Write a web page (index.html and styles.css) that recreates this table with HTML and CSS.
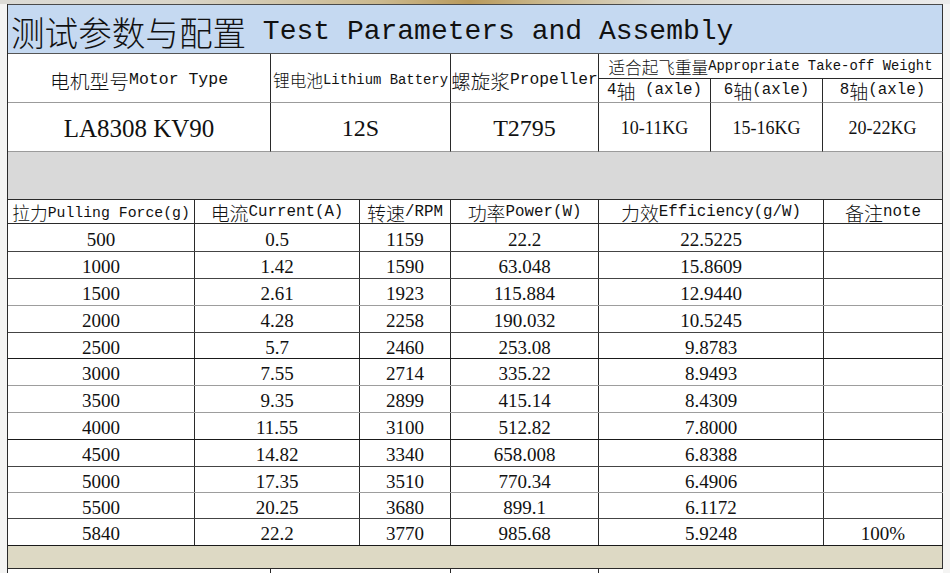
FILE: index.html
```html
<!DOCTYPE html>
<html lang="zh">
<head>
<meta charset="utf-8">
<title>测试参数与配置 Test Parameters and Assembly</title>
<link rel="stylesheet" href="styles.css">
</head>
<body>
<div class="strip"></div>
<div class="sheet">
  <div class="title mono"><span class="zh">测试参数与配置</span> Test Parameters and Assembly</div>

  <div class="spec">
    <div class="c tall lg mono f198"><span class="zh">电机型号</span>Motor Type</div>
    <div class="c tall lg mono f167"><span class="zh">锂电池</span>Lithium Battery</div>
    <div class="c tall lg mono f195"><span class="zh">螺旋浆</span>Propeller</div>
    <div class="c wide mono f166"><span class="zh">适合起飞重量</span>Appropriate Take-off Weight</div>
    <div class="c lg axle mono f19">4<span class="zh">轴</span> (axle)</div>
    <div class="c lg axle mono f19">6<span class="zh">轴</span>(axle)</div>
    <div class="c lg axle mono f19">8<span class="zh">轴</span>(axle)</div>
    <div class="c lg num big">LA8308 KV90</div>
    <div class="c lg num mid">12S</div>
    <div class="c lg num mid">T2795</div>
    <div class="c lg num small">10-11KG</div>
    <div class="c lg num small">15-16KG</div>
    <div class="c lg num small">20-22KG</div>
  </div>

  <div class="band grey"></div>

  <div class="data">
    <div class="row head mono">
      <div class="f178"><span class="zh">拉力</span>Pulling Force(g)</div>
      <div><span class="zh">电流</span>Current(A)</div>
      <div><span class="zh">转速</span>/RPM</div>
      <div><span class="zh">功率</span>Power(W)</div>
      <div><span class="zh">力效</span>Efficiency(g/W)</div>
      <div><span class="zh">备注</span>note</div>
    </div>
    <div class="row num h28"><div>500</div><div>0.5</div><div>1159</div><div>22.2</div><div>22.5225</div><div></div></div>
    <div class="row num"><div>1000</div><div>1.42</div><div>1590</div><div>63.048</div><div>15.8609</div><div></div></div>
    <div class="row num lg"><div>1500</div><div>2.61</div><div>1923</div><div>115.884</div><div>12.9440</div><div></div></div>
    <div class="row num"><div>2000</div><div>4.28</div><div>2258</div><div>190.032</div><div>10.5245</div><div></div></div>
    <div class="row num h26 dk"><div>2500</div><div>5.7</div><div>2460</div><div>253.08</div><div>9.8783</div><div></div></div>
    <div class="row num lg"><div>3000</div><div>7.55</div><div>2714</div><div>335.22</div><div>8.9493</div><div></div></div>
    <div class="row num lg"><div>3500</div><div>9.35</div><div>2899</div><div>415.14</div><div>8.4309</div><div></div></div>
    <div class="row num dk"><div>4000</div><div>11.55</div><div>3100</div><div>512.82</div><div>7.8000</div><div></div></div>
    <div class="row num"><div>4500</div><div>14.82</div><div>3340</div><div>658.008</div><div>6.8388</div><div></div></div>
    <div class="row num h26 lg"><div>5000</div><div>17.35</div><div>3510</div><div>770.34</div><div>6.4906</div><div></div></div>
    <div class="row num h26"><div>5500</div><div>20.25</div><div>3680</div><div>899.1</div><div>6.1172</div><div></div></div>
    <div class="row num dk"><div>5840</div><div>22.2</div><div>3770</div><div>985.68</div><div>5.9248</div><div>100%</div></div>
  </div>

  <div class="band tan"></div>

  <div class="tail">
    <div></div><div></div><div></div><div class="open"></div>
  </div>
</div>
</body>
</html>
```

FILE: styles.css
```css
* {
  box-sizing: border-box;
}

html, body {
  margin: 0;
  padding: 0;
}

body {
  background: #f4f4f3;
  color: #111;
  width: 950px;
  height: 573px;
  overflow: hidden;
}

.strip {
  height: 4px;
  background: linear-gradient(90deg, #dcdbd6 0, #d9d5c9 180px, #cbb98f 380px, #b99a5c 470px, #c9b68a 540px, #dad6ca 660px, #e4e3e0 800px, #ebebeb 950px);
}

.sheet {
  margin-left: 7px;
  width: 936px;
  border-left: 1px solid #2a2a2a;
  background: #fff;
}

.mono {
  font-family: "Liberation Mono", "Noto Sans CJK SC", monospace;
}

.num {
  font-family: "Liberation Serif", "Noto Sans CJK SC", serif;
}

.zh {
  font-family: "Noto Sans CJK SC", sans-serif;
  font-size: 1.2em;
  font-weight: 300;
}

/* title */
.title {
  height: 50px;
  background: #c5d9f1;
  border-top: 1px solid #4a4a4a;
  border-bottom: 1px solid #555;
  border-right: 1px solid #333;
  display: flex;
  align-items: center;
  padding: 5px 0 0 3px;
  font-size: 28px;
  line-height: 1;
  white-space: pre;
}

/* spec block */
.spec {
  display: grid;
  grid-template-columns: 263px 180px 148px 112px 112px 120px;
  grid-template-rows: 25px 24px 49px;
}

.c {
  border-right: 1px solid #2a2a2a;
  border-bottom: 1px solid #2a2a2a;
  display: flex;
  align-items: center;
  justify-content: center;
  white-space: pre;
  line-height: 1;
}

.c.tall {
  grid-row: span 2;
  padding-top: 5px;
}

.c.wide {
  grid-column: span 3;
  padding-top: 2px;
}

.c.axle {
  padding-top: 1px;
}

.c.lg {
  border-bottom-color: #9b9b9b;
}

.f198 { font-size: 16.5px; }
.f195 { font-size: 16.25px; }
.f19 { font-size: 15.8px; }
.f167 { font-size: 13.9px; }
.f166 { font-size: 13.85px; }
.f178 { font-size: 14.8px; }

.big { font-size: 25px; padding-top: 2px; }
.mid { font-size: 24px; padding-top: 2px; }
.small { font-size: 18px; padding-top: 2px; }

/* bands */
.band {
  border-right: 1px solid #333;
  border-bottom: 1px solid #2a2a2a;
}

.band.grey {
  height: 48px;
  background: #d9d9d9;
}

.band.tan {
  height: 23px;
  background: #ddd9c4;
}

/* data table */
.row {
  display: grid;
  grid-template-columns: 187px 165px 91px 148px 225px 119px;
  height: 27px;
  border-bottom: 1px solid #444;
  font-size: 19px;
  line-height: 1;
}

.row.h28 { height: 28px; }
.row.h26 { height: 26px; }
.row.lg { border-bottom-color: #9d9d9d; }
.row.dk { border-bottom-color: #1a1a1a; }

.row > div {
  border-right: 1px solid #2a2a2a;
  display: flex;
  align-items: center;
  justify-content: center;
  white-space: nowrap;
  padding-top: 3px;
}

.row.head {
  height: 24px;
  font-size: 15.8px;
  border-bottom-color: #2a2a2a;
}

.row.head > div {
  padding-top: 3px;
}

.row.head > .f178 {
  font-size: 14.8px;
}

/* tail */
.tail {
  display: grid;
  grid-template-columns: 263px 180px 148px 1fr;
  height: 10px;
}

.tail > div {
  border-right: 1px solid #2a2a2a;
}

.tail > .open {
  border-right: none;
}
```
